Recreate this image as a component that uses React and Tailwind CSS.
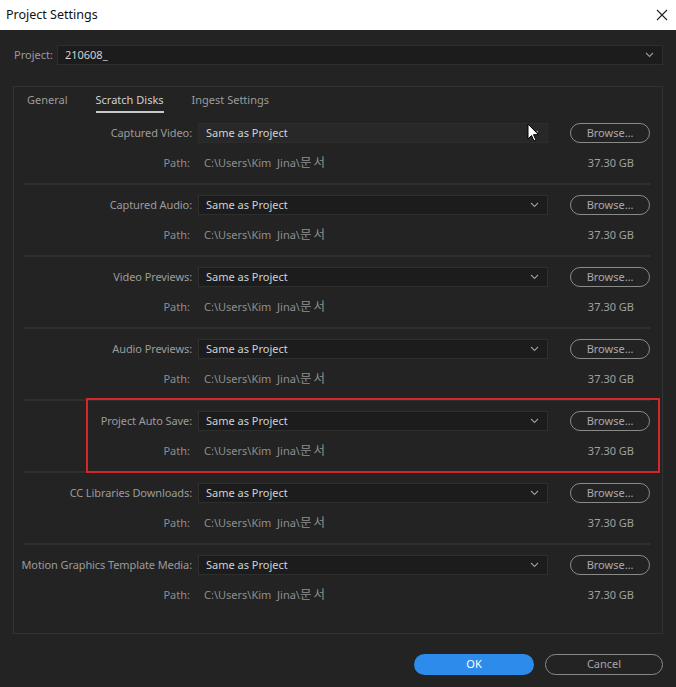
import React from 'react';

const rows = [
  'Captured Video:',
  'Captured Audio:',
  'Video Previews:',
  'Audio Previews:',
  'Project Auto Save:',
  'CC Libraries Downloads:',
  'Motion Graphics Template Media:',
];

const Chevron = () => (
  <svg width="9" height="6" viewBox="0 0 9 6" className="shrink-0">
    <path d="M1 1l3.5 3.5L8 1" fill="none" stroke="#9a9a9a" strokeWidth="1.1" />
  </svg>
);

const Select = ({ value, hover }) => (
  <div
    className={`flex h-[20px] items-center justify-between border pl-[7px] pr-[8px] ${
      hover ? 'bg-[#282828] border-[#2c2c2c]' : 'bg-[#1c1c1c] border-[#2e2e2e]'
    }`}
  >
    <span className="text-[#d2d2d2]">{value}</span>
    <Chevron />
  </div>
);

const Cursor = () => (
  <svg width="13" height="19" viewBox="0 0 13 19" className="absolute left-[329px] top-[0px]">
    <path d="M1 1v15l3.5-3.5 2.5 5.5 2-1-2.5-5.3H11.5z" fill="#fff" stroke="#000" strokeWidth="1" />
  </svg>
);

// one block per scratch disk entry
const DiskRow = ({ label, index, last }) => (
  <div
    className={`relative mx-[9px] mr-[12px] pt-[10px] ${
      last ? 'pb-[28px]' : 'pb-[10px] border-b-2 border-[#2f2f2f]'
    }`}
  >
    <div className="grid grid-cols-[169px_350px_80px] gap-x-[6px]">
      <div className="flex h-[20px] items-center justify-end whitespace-nowrap tracking-[-0.1px] text-[#9b9b9b]">
        {label}
      </div>
      <div className="relative">
        <Select value="Same as Project" hover={index === 0} />
        {index === 0 && <Cursor />}
      </div>
      <button className="ml-[16px] h-[20px] w-[80px] rounded-full border border-[#8a8a8a] text-[#a9a9a9]">
        Browse…
      </button>
    </div>
    <div className="mt-[10px] grid h-[20px] grid-cols-[167px_1fr_auto] items-center">
      <span className="text-right text-[#8e8e8e]">Path:</span>
      <span className="pl-[14px] text-[#8e8e8e]">
        C:\Users\Kim&nbsp; Jina\<span className="text-[12.5px] tracking-[2px]">문서</span>
      </span>
      <span className="pr-[16px] text-[#a0a0a0]">37.30 GB</span>
    </div>
    {index === 4 && (
      <div className="pointer-events-none absolute -top-[3px] left-[63px] -right-[10px] bottom-[-2px] border-2 border-[#d5262a]" />
    )}
  </div>
);

export default function App() {
  return (
    <div
      className="flex h-[687px] w-[676px] flex-col bg-[#232323] text-[11px]"
      style={{ fontFamily: '"Noto Sans", "Noto Sans CJK KR", sans-serif' }}
    >
      {/* title bar */}
      <div className="flex h-[30px] items-center justify-between bg-white pl-[6px] pr-[8px]">
        <span className="text-[12.5px] text-[#111]">Project Settings</span>
        <svg width="12" height="12" viewBox="0 0 12 12">
          <path d="M1 1l10 10M11 1L1 11" stroke="#222" strokeWidth="1.1" />
        </svg>
      </div>

      <div className="flex flex-1 flex-col px-[13px] pt-[15px]">
        {/* project selector */}
        <div className="flex items-center">
          <span className="mr-[4px] pl-[1px] whitespace-nowrap text-[#9b9b9b]">Project:</span>
          <div className="flex-1">
            <Select value="210608_" />
          </div>
        </div>

        {/* tab panel */}
        <div className="mt-[21px] h-[548px] border border-[#333]">
          <div className="flex h-[26px] items-end gap-[28px] pl-[13px]">
            <span className="pb-[5px] text-[#9c9c9c]">General</span>
            <span className="border-b-2 border-[#c9c9c9] pb-[3px] text-[#d0d0d0]">Scratch Disks</span>
            <span className="pb-[5px] text-[#9c9c9c]">Ingest Settings</span>
          </div>
          {rows.map((label, i) => (
            <DiskRow key={label} label={label} index={i} last={i === rows.length - 1} />
          ))}
        </div>

        {/* footer buttons */}
        <div className="mt-[20px] flex justify-end gap-[11px]">
          <button className="h-[21px] w-[120px] rounded-full bg-[#2d8ceb] text-white">OK</button>
          <button className="h-[21px] w-[118px] rounded-full border border-[#8a8a8a] text-[#a6a6a6]">
            Cancel
          </button>
        </div>
      </div>
    </div>
  );
}
